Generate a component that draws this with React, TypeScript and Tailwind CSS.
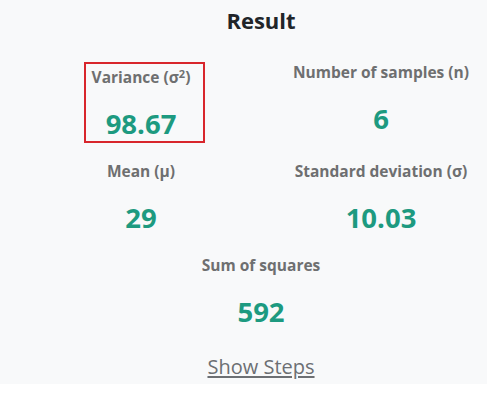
import React from "react";

const labelCls = "text-[15.5px] font-bold leading-[20px] text-[#6e6f70]";
const valueCls = "mt-[18.5px] text-[27.5px] font-bold leading-[35px] text-[#1d9a80]";

function Stat({ label, value }: { label: React.ReactNode; value: string }) {
  return (
    <div className="flex flex-col items-center text-center">
      <p className={labelCls}>{label}</p>
      <p className={valueCls}>{value}</p>
    </div>
  );
}

export default function App() {
  return (
    <div
      className="w-full overflow-hidden bg-white"
      style={{ fontFamily: '"Open Sans", "Noto Sans", sans-serif' }}
    >
      <div className="h-[384px] bg-[#f8f9fa]">
        <div className="ml-[21px] w-[480px] pt-[5px]">
          <h2 className="text-center text-[22px] font-bold leading-[30px] text-[#212529]">
            Result
          </h2>

          <div className="mt-[27px] grid grid-cols-2 items-start">
            <div className="flex justify-center">
              <div className="ml-[6px] flex w-[121px] flex-col items-center border-2 border-[#d8262c] pr-[6px] text-center">
                <p className="text-[15.5px] font-bold leading-[27px] text-[#6e6f70]">
                  Variance (σ<sup className="text-[11px]">2</sup>)
                </p>
                <p className="mt-[15px] text-[27.5px] font-bold leading-[35px] text-[#1d9a80]">
                  98.67
                </p>
              </div>
            </div>
            <Stat label="Number of samples (n)" value="6" />
          </div>

          <div className="mt-[18px] grid grid-cols-2">
            <Stat label="Mean (μ)" value="29" />
            <Stat label="Standard deviation (σ)" value="10.03" />
          </div>

          <div className="mt-[20.5px]">
            <Stat label="Sum of squares" value="592" />
          </div>

          <div className="mt-[24.5px] text-center">
            <a
              href="#"
              className="text-[20px] leading-[28px] text-[#6c6f73] underline underline-offset-2"
            >
              Show Steps
            </a>
          </div>
        </div>
      </div>
      <div className="h-[10px] bg-white" />
    </div>
  );
}
